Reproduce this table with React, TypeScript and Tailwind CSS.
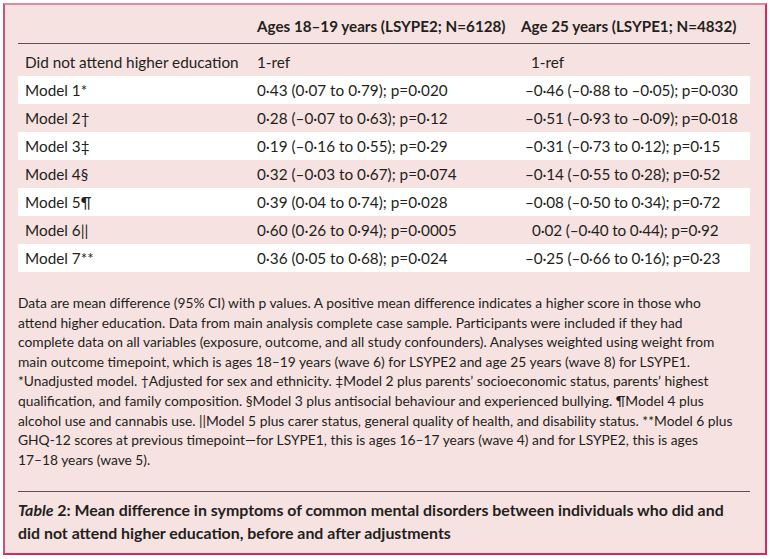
import React from "react";

const rows: [string, string, string, boolean][] = [
  ["Model 1*", "0·43 (0·07 to 0·79); p=0·020", "–0·46 (–0·88 to –0·05); p=0·030", false],
  ["Model 2†", "0·28 (–0·07 to 0·63); p=0·12", "–0·51 (–0·93 to –0·09); p=0·018", false],
  ["Model 3‡", "0·19 (–0·16 to 0·55); p=0·29", "–0·31 (–0·73 to 0·12); p=0·15", false],
  ["Model 4§", "0·32 (–0·03 to 0·67); p=0·074", "–0·14 (–0·55 to 0·28); p=0·52", false],
  ["Model 5¶", "0·39 (0·04 to 0·74); p=0·028", "–0·08 (–0·50 to 0·34); p=0·72", false],
  ["Model 6||", "0·60 (0·26 to 0·94); p=0·0005", "0·02 (–0·40 to 0·44); p=0·92", true],
  ["Model 7**", "0·36 (0·05 to 0·68); p=0·024", "–0·25 (–0·66 to 0·16); p=0·23", false],
];

const notes = [
  "Data are mean difference (95% CI) with p values. A positive mean difference indicates a higher score in those who",
  "attend higher education. Data from main analysis complete case sample. Participants were included if they had",
  "complete data on all variables (exposure, outcome, and all study confounders). Analyses weighted using weight from",
  "main outcome timepoint, which is ages 18–19 years (wave 6) for LSYPE2 and age 25 years (wave 8) for LSYPE1.",
  "*Unadjusted model. †Adjusted for sex and ethnicity. ‡Model 2 plus parents’ socioeconomic status, parents’ highest",
  "qualification, and family composition. §Model 3 plus antisocial behaviour and experienced bullying. ¶Model 4 plus",
  "alcohol use and cannabis use. ||Model 5 plus carer status, general quality of health, and disability status. **Model 6 plus",
  "GHQ-12 scores at previous timepoint—for LSYPE1, this is ages 16–17 years (wave 4) and for LSYPE2, this is ages",
  "17–18 years (wave 5).",
];

export default function App() {
  return (
    <div className="w-[770px] h-[559px] bg-white pl-[3px] pt-[3px]" style={{ fontFamily: "Lato, 'Open Sans', sans-serif" }}>
      <div className="w-[764px] h-[552px] bg-[#f6e2e0] border-2 border-t-[#de8aa2] border-l-[#c8537a] border-r-[#d42a62] border-b-[#d42a62] pl-[13px] pt-[4px] text-[#231f20]">
        <div className="w-[732px]">
          <div className="flex h-[35px] items-center border-b-[1.5px] border-[#555] text-[15.2px] font-bold">
            <div className="w-[239px]" />
            <div className="w-[264px]">Ages 18–19 years (LSYPE2; N=6128)</div>
            <div>Age 25 years (LSYPE1; N=4832)</div>
          </div>
          <div className="flex h-[32px] items-center pt-[4px] text-[15.3px]">
            <div className="w-[239px] pl-[7px]">Did not attend higher education</div>
            <div className="w-[268px]">1-ref</div>
            <div className="pl-[6px]">1-ref</div>
          </div>
          {rows.map(([m, a, b, ind], i) => (
            <div key={m} className={`flex h-[28px] items-center text-[15.3px] ${i % 2 === 0 ? "bg-white" : ""}`}>
              <div className="w-[239px] pl-[7px]">{m}</div>
              <div className="w-[268px]">{a}</div>
              <div className={`tracking-[-0.15px] ${ind ? "pl-[7px]" : ""}`}>{b}</div>
            </div>
          ))}
          <div className="mt-[21px] text-[13.8px] leading-[19.6px]">
            {notes.map((n) => (
              <div key={n} className="whitespace-nowrap">{n}</div>
            ))}
          </div>
          <div className="mt-[22px] border-t-[1.5px] border-[#555] pt-[6px] text-[15.9px] font-bold leading-[23px]">
            <div className="whitespace-nowrap"><i>Table</i> 2: Mean difference in symptoms of common mental disorders between individuals who did and</div>
            <div className="whitespace-nowrap">did not attend higher education, before and after adjustments</div>
          </div>
        </div>
      </div>
    </div>
  );
}
